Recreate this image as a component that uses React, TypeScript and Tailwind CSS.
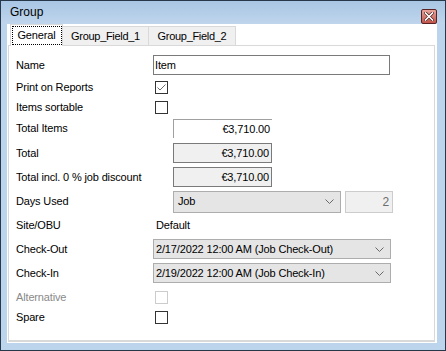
import React from 'react';

const Chevron = () => (
  <svg width="9" height="5" viewBox="0 0 9 5" className="shrink-0">
    <path d="M0.5 0.5 L4.5 4.5 L8.5 0.5" fill="none" stroke="#6a6a6a" strokeWidth="1" />
  </svg>
);

const CheckBox = ({ checked = false, disabled = false }: { checked?: boolean; disabled?: boolean }) => (
  <div
    className={`ml-[2px] w-[13px] h-[13px] border bg-white flex items-center justify-center ${
      disabled ? 'border-[#cccccc]' : 'border-[#333333]'
    }`}
  >
    {checked && (
      <svg width="11" height="11" viewBox="0 0 11 11">
        <path d="M1.5 5.5 L4 8 L9.5 2.5" fill="none" stroke="#6b6b6b" strokeWidth="1" />
      </svg>
    )}
  </div>
);

const Row = ({ label, h, muted = false, children }: { label: string; h: string; muted?: boolean; children?: React.ReactNode }) => (
  <div className={`flex items-center ${h}`}>
    <div className={`w-[137px] shrink-0 ${muted ? 'text-[#8a8a8a]' : 'text-black'}`}>{label}</div>
    {children}
  </div>
);

export default function App() {
  return (
    <div className="w-[446px] h-[351px] border border-[#26384a] bg-[#bcd4ec] flex flex-col font-['Liberation_Sans',Arial,sans-serif] text-[11px] tracking-[-0.15px] select-none">
      {/* Title bar */}
      <div className="h-[23px] shrink-0 flex items-end justify-between bg-gradient-to-b from-[#a9c6e4] to-[#bfd5ec]">
        <span className="pl-[9px] pb-[3px] text-[12px] tracking-normal text-black">Group</span>
        <div className="mr-[8px] w-[16px] h-[15px] rounded-[2px] border border-[#5a2222] bg-gradient-to-b from-[#e7a49c] to-[#c2544a] flex items-center justify-center">
          <svg width="10" height="9" viewBox="0 0 10 9">
            <path d="M1.5 1 L8.5 8 M8.5 1 L1.5 8" stroke="#4a2020" strokeWidth="3" strokeLinecap="square" />
            <path d="M1.5 1 L8.5 8 M8.5 1 L1.5 8" stroke="#ffffff" strokeWidth="1.6" strokeLinecap="square" />
          </svg>
        </div>
      </div>

      {/* Client area */}
      <div className="ml-[6px] w-[430px] h-[319px] bg-white flex flex-col pl-[1px] pr-[2px] pb-[1px]">
        {/* Tabs */}
        <div className="flex items-end h-[22px] pl-[2px] -mb-px relative z-10 shrink-0">
          <div className="h-[22px] w-[53px] bg-white border border-b-0 border-[#d9d9d9] flex items-center justify-center">
            <span className="h-[19px] w-[50px] border border-dotted border-black flex items-center justify-center">General</span>
          </div>
          <div className="h-[19px] mb-px w-[86px] bg-[#f0f0f0] border border-l-0 border-b-0 border-[#d9d9d9] flex items-center justify-center tracking-[-0.3px]">
            Group_Field_1
          </div>
          <div className="h-[19px] mb-px w-[87px] bg-[#f0f0f0] border border-l-0 border-b-0 border-[#d9d9d9] flex items-center justify-center tracking-[-0.3px]">
            Group_Field_2
          </div>
        </div>

        {/* Panel */}
        <div className="flex-1 border border-[#d9d9d9] border-b-2 pt-[8px] pl-[7px] flex flex-col">
          <Row label="Name" h="h-[22px]">
            <div className="w-[237px] h-[20px] border border-[#7a7a7a] bg-white flex items-center pl-[1px]">Item</div>
          </Row>
          <Row label="Print on Reports" h="h-[22px]">
            <CheckBox checked />
          </Row>
          <Row label="Items sortable" h="h-[18px]">
            <CheckBox />
          </Row>
          <Row label="Total Items" h="h-[25px]">
            <div className="ml-[20px] w-[99px] h-[19px] border-t border-l border-[#a0a0a0] bg-white flex items-center justify-end pr-[2px]">
              €3,710.00
            </div>
          </Row>
          <Row label="Total" h="h-[24px]">
            <div className="ml-[20px] w-[99px] h-[20px] border border-[#7a7a7a] bg-[#f0f0f0] flex items-center justify-end pr-[2px]">
              €3,710.00
            </div>
          </Row>
          <Row label="Total incl. 0 % job discount" h="h-[24px]">
            <div className="ml-[20px] w-[99px] h-[20px] border border-[#7a7a7a] bg-[#f0f0f0] flex items-center justify-end pr-[2px]">
              €3,710.00
            </div>
          </Row>
          <Row label="Days Used" h="h-[25px]">
            <div className="ml-[20px] w-[168px] h-[22px] border border-[#adadad] bg-[#e5e5e5] flex items-center justify-between pl-[4px] pr-[6px]">
              <span>Job</span>
              <Chevron />
            </div>
            <div className="ml-[4px] w-[48px] h-[22px] border border-[#cccccc] bg-[#f0f0f0] flex items-center justify-end pr-[3px] text-[#6d6d6d] text-[12px]">
              2
            </div>
          </Row>
          <Row label="Site/OBU" h="h-[23px]">
            <span className="ml-[3px]">Default</span>
          </Row>
          <Row label="Check-Out" h="h-[24px]">
            <div className="w-[238px] h-[20px] border border-[#adadad] bg-[#e5e5e5] flex items-center justify-between pl-[2px] pr-[6px]">
              <span>2/17/2022 12:00 AM (Job Check-Out)</span>
              <Chevron />
            </div>
          </Row>
          <Row label="Check-In" h="h-[24px]">
            <div className="w-[238px] h-[20px] border border-[#adadad] bg-[#e5e5e5] flex items-center justify-between pl-[2px] pr-[6px]">
              <span>2/19/2022 12:00 AM (Job Check-In)</span>
              <Chevron />
            </div>
          </Row>
          <Row label="Alternative" h="h-[24px]" muted>
            <CheckBox disabled />
          </Row>
          <Row label="Spare" h="h-[17px]">
            <CheckBox />
          </Row>
        </div>
      </div>
    </div>
  );
}
